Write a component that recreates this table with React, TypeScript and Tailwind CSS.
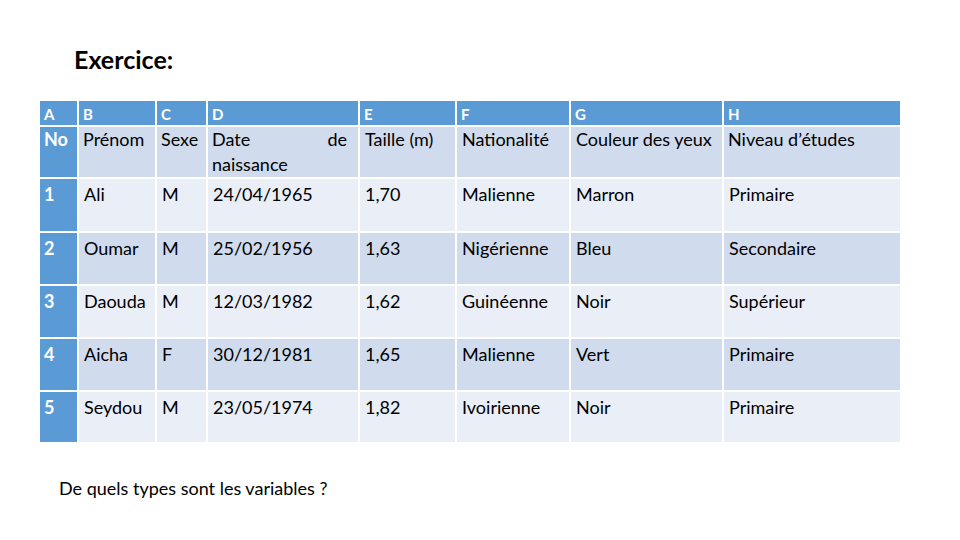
const rows = [
  ['1', 'Ali', 'M', '24/04/1965', '1,70', 'Malienne', 'Marron', 'Primaire'],
  ['2', 'Oumar', 'M', '25/02/1956', '1,63', 'Nigérienne', 'Bleu', 'Secondaire'],
  ['3', 'Daouda', 'M', '12/03/1982', '1,62', 'Guinéenne', 'Noir', 'Supérieur'],
  ['4', 'Aicha', 'F', '30/12/1981', '1,65', 'Malienne', 'Vert', 'Primaire'],
  ['5', 'Seydou', 'M', '23/05/1974', '1,82', 'Ivoirienne', 'Noir', 'Primaire'],
];

const letters = ['A', 'B', 'C', 'D', 'E', 'F', 'G', 'H'];

export default function App() {
  return (
    <div className="w-[960px] h-[540px] bg-white overflow-hidden font-['Lato','Open_Sans',sans-serif] text-black">
      <div className="pt-[44px] pl-[74px] text-[25px] font-bold leading-[30px]">Exercice:</div>

      <div className="mt-[27px] ml-[40px] w-[860px] grid grid-cols-[37px_76px_49px_150px_95px_112px_151px_176px] grid-rows-[24px_50px_52px_51px_51px_51px_50px] gap-x-[2px] gap-y-[2px] text-[18px]">
        {letters.map((l) => (
          <div key={l} className="bg-[#5b9bd5] text-white font-bold text-[15px] leading-[24px] pl-[4px] pt-[1px]">
            {l}
          </div>
        ))}

        <div className="bg-[#5b9bd5] text-white font-bold pl-[4px] leading-[25px]">No</div>
        <div className="bg-[#d0dbed] pl-[4px] leading-[25px]">Prénom</div>
        <div className="bg-[#d0dbed] pl-[4px] leading-[25px]">Sexe</div>
        <div className="bg-[#d0dbed] pl-[4px] pr-[11px] leading-[25px]">
          <div className="flex justify-between">
            <span>Date</span>
            <span>de</span>
          </div>
          <div>naissance</div>
        </div>
        <div className="bg-[#d0dbed] pl-[5px] leading-[25px]">Taille (m)</div>
        <div className="bg-[#d0dbed] pl-[5px] leading-[25px]">Nationalité</div>
        <div className="bg-[#d0dbed] pl-[5px] leading-[25px]">Couleur des yeux</div>
        <div className="bg-[#d0dbed] pl-[4px] leading-[25px]">Niveau d’études</div>

        {rows.map((r, i) => {
          const bg = i % 2 === 0 ? 'bg-[#e9eef7]' : 'bg-[#d0dbed]';
          return r.map((c, j) => (
            <div
              key={i + '-' + j}
              className={
                j === 0
                  ? 'bg-[#5b9bd5] text-white font-bold pl-[4px] pt-[3px] leading-[25px]'
                  : bg + ' pl-[5px] pt-[3px] leading-[25px]'
              }
            >
              {c}
            </div>
          ));
        })}
      </div>

      <div className="mt-[34px] ml-[59px] text-[18px] leading-[24px]">De quels types sont les variables ?</div>
    </div>
  );
}
